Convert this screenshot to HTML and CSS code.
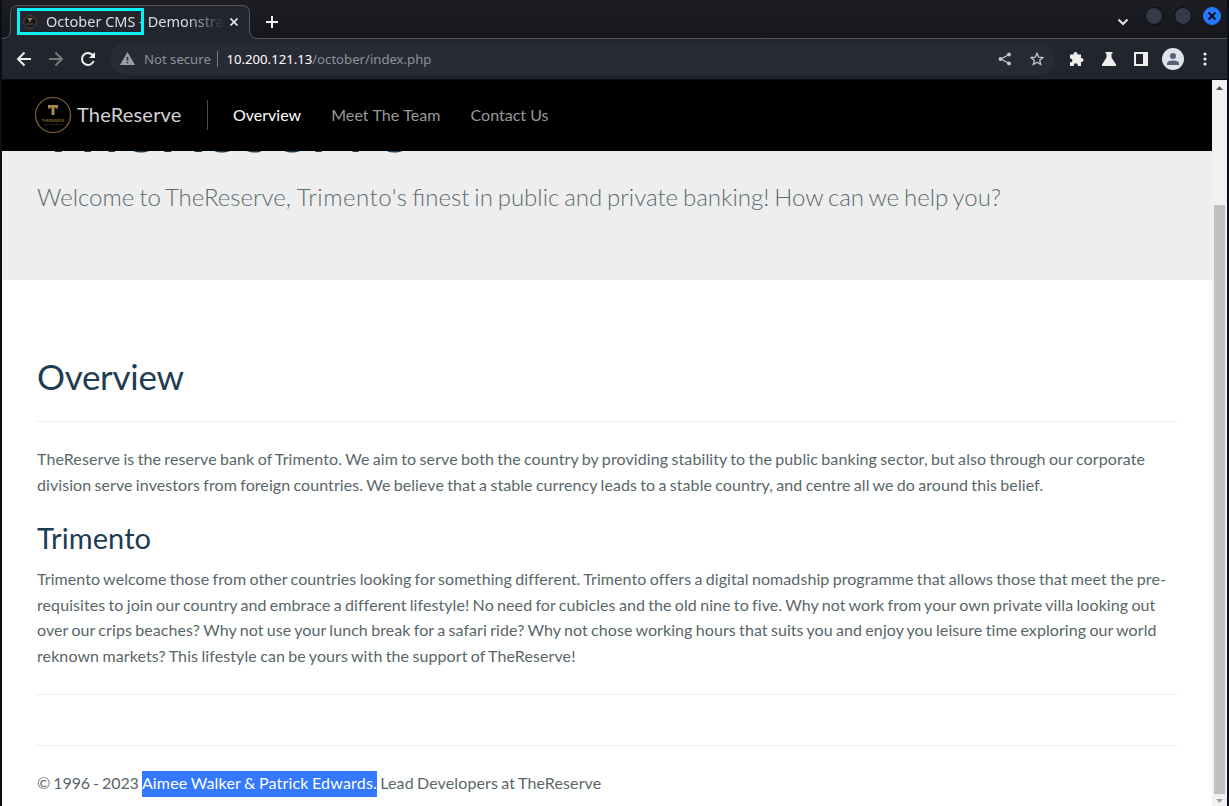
FILE: index.html
```html
<!DOCTYPE html>
<html lang="en">
<head>
<meta charset="utf-8">
<title>October CMS - Demonstration</title>
<link rel="stylesheet" href="styles.css">
</head>
<body>
<div class="window">
  <header class="tabs">
    <svg class="tab-shape" width="262" height="36" viewBox="0 0 262 36"><path class="tab-fill" d="M0 35.5Q8 35.500 8.500 27V10Q8.500 2.500 16 2.500H240Q247.500 2.500 247.500 10V27Q247.500 35.500 256 35.500V36H0Z"/><path class="tab-line" d="M0 35.500Q8.500 35.500 8.500 27V10Q8.500 2.500 16 2.500H240Q247.500 2.500 247.500 10V27Q247.500 35.500 256 35.500H262"/></svg>
    <div class="tab">
      <svg class="favicon" width="14" height="14" viewBox="0 0 36 36"><circle cx="18" cy="18" r="16" fill="#16151a" stroke="#584c40" stroke-width="2.500"/><path d="M12 8H24V12H20V18H16V12H12Z" fill="#8d784f"/><path d="M8 22H28V24.500H8Z" fill="#63574c"/></svg>
      <span class="tab-title">October CMS - Demonstra</span>
      <svg class="tab-close" width="10" height="10" viewBox="0 0 10 10"><path d="M1.500 1.500L8.500 8.500M8.500 1.500L1.500 8.500"/></svg>
    </div>
    <div class="marker"></div>
    <svg class="plus" width="12" height="12" viewBox="0 0 12 12"><path d="M6 0V12M0 6H12"/></svg>
    <div class="controls">
      <svg class="chevron" width="12" height="8" viewBox="0 0 12 8"><path d="M1.500 1.500L6 6L10.500 1.500"/></svg>
      <span class="dot"></span><span class="dot"></span>
      <span class="dot close"><svg width="10" height="10" viewBox="0 0 10 10"><path d="M1.500 1.500L8.500 8.500M8.500 1.500L1.500 8.500"/></svg></span>
    </div>
  </header>
  <div class="toolbar">
    <svg class="back" width="16" height="16" viewBox="0 0 16 16"><path d="M15 8H2M8.500 1.500L2 8L8.500 14.500"/></svg>
    <svg class="forward" width="16" height="16" viewBox="0 0 16 16"><path d="M1 8H14M7.500 1.500L14 8L7.500 14.500"/></svg>
    <svg class="reload" width="16" height="16" viewBox="0 0 16 16"><path d="M13.600 10A6 6 0 1 1 12.300 3.800L14 5.500"/><path class="solid" d="M15 1V7H9Z"/></svg>
    <div class="address">
      <svg class="warn" width="15" height="14" viewBox="0 0 15 14"><path fill="#9aa0a6" d="M7.500 0L15 13H0Z"/><path d="M6.700 5H8.300V8.500H6.700ZM6.700 9.800H8.300V11.300H6.700Z" fill="#282a34"/></svg>
      <span class="secure">Not secure</span><span class="sep"></span>
      <span class="url"><b>10.200.121.13</b>/october/index.php</span>
      <svg class="share" width="14" height="14" viewBox="0 0 14 14"><path d="M11 2.500L3 7L11 11.500"/><circle cx="11" cy="2.500" r="1.900"/><circle cx="2.500" cy="7" r="1.900"/><circle cx="11" cy="11.500" r="1.900"/></svg>
      <svg class="star" width="14" height="14" viewBox="0 0 14 14"><path d="M7 1.300L8.700 5.200L12.900 5.600L9.700 8.300L10.700 12.500L7 10.300L3.300 12.500L4.300 8.300L1.100 5.600L5.300 5.200Z"/></svg>
    </div>
    <svg class="ext" width="15" height="15" viewBox="0 0 15 15"><path d="M1.500 2.500H4.500V2A2 2 0 0 1 8.500 2V2.500H12V6H12.500A2 2 0 0 1 12.500 10H12V14H8.800V13.200A2 2 0 0 0 4.800 13.200V14H1V10.300H1.500A1.800 1.800 0 0 0 1.500 6.500H1V3Z"/></svg>
    <svg class="flask" width="14" height="14" viewBox="0 0 14 14"><path d="M3.500 0H10.500V1.500H9.500V5.500L14 12.500V14H0V12.500L4.500 5.500V1.500H3.500Z"/></svg>
    <svg class="panel" width="14" height="14" viewBox="0 0 14 14"><path fill-rule="evenodd" d="M0 0H14V14H0ZM2 2V12H9V2Z"/></svg>
    <svg class="avatar" width="22" height="22" viewBox="0 0 22 22"><circle cx="11" cy="11" r="11" fill="#dfe3ea"/><circle cx="11" cy="8" r="3" fill="#586377"/><path d="M5 17V15.500Q5 12.500 11 12.500T17 15.500V17Z" fill="#586377"/></svg>
    <svg class="more" width="4" height="14" viewBox="0 0 4 14"><circle cx="2" cy="2" r="1.600"/><circle cx="2" cy="7" r="1.600"/><circle cx="2" cy="12" r="1.600"/></svg>
  </div>
  <div class="viewport">
    <div class="page">
      <nav class="nav">
        <svg class="logo" width="38" height="38" viewBox="0 0 38 38"><circle cx="19" cy="19" r="17.500" fill="none" stroke="#7d6237" stroke-width="1.200"/><path d="M14 9H24V12.500H21.500V11.500H20.500V19H17.500V11.500H16.500V12.500H14Z" fill="#a58a50"/><text x="19" y="25.500" text-anchor="middle" textLength="23" lengthAdjust="spacingAndGlyphs">THERESERVE</text><path class="logo-rule" d="M10 28.500H28"/></svg>
        <span class="brand">TheReserve</span><span class="divider"></span>
        <a class="link active">Overview</a><a class="link team">Meet The Team</a><a class="link">Contact Us</a>
      </nav>
      <section class="hero">
        <h1>TheReserve</h1>
        <p class="lead">Welcome to TheReserve, <span class="place">Trimento's</span> finest in public and private banking! How can we help you?</p>
      </section>
      <main class="content">
        <h2>Overview</h2>
        <hr>
        <p>TheReserve is the reserve bank of Trimento. We aim to serve both the country by providing stability to the public banking sector, but also through our corporate<br><span class="snug">division serve investors from foreign countries. We believe that a stable currency leads to a stable country, and centre all we do around this belief.</span></p>
        <h3>Trimento</h3>
        <p><span class="snug">Trimento welcome those from other countries looking for something different. Trimento offers a digital nomadship programme that allows those that meet the pre-<br>requisites to join our country and embrace a different lifestyle! No need for cubicles and the old nine to five. Why not work from your own private villa looking out<br>over our crips beaches? Why not use your lunch break for a safari ride? Why not chose working hours that suits you and enjoy you leisure time exploring our world</span><br>reknown markets? This lifestyle can be yours with the support of TheReserve!</p>
        <hr class="end">
        <hr class="foot-rule">
        <footer><span class="years">© 1996 - 2023 </span><mark>Aimee Walker &amp; Patrick Edwards.</mark><span class="role"> Lead Developers at TheReserve</span></footer>
      </main>
    </div>
    <div class="scrollbar">
      <svg width="15" height="15" viewBox="0 0 15 15"><path d="M4 10L7.500 6L11 10Z" fill="#505050"/></svg>
      <div class="thumb"></div>
      <svg class="down" width="15" height="12" viewBox="0 0 15 12"><path d="M4 5H11L7.500 9Z" fill="#a3a3a3"/></svg>
    </div>
  </div>
</div>
</body>
</html>
```
FILE: styles.css
```css
* { box-sizing: border-box; }
body { margin: 0; width: 1229px; height: 806px; overflow: hidden; background: #0b0e16; font-family: Lato, sans-serif; }
svg { display: block; flex: none; }
svg path { stroke-width: 2; }
.window { height: 806px; padding: 0 2px; display: flex; flex-direction: column; }
.tabs { height: 39px; flex: none; display: flex; position: relative; background: linear-gradient(#1c1d22, #17181d); border-bottom: 1px solid #54565c; font-family: "Noto Sans", sans-serif; }
.tab-shape { position: absolute; left: 0; top: 3px; }
.tab-fill { fill: #23252e; }
.tab-line { fill: none; stroke: #54565c; }
.tab-shape .tab-line { stroke-width: 1; }
.tab { position: relative; display: flex; align-items: center; width: 248px; height: 35px; margin-top: 4px; padding-left: 21px; }
.tab-title { margin: 0 0 2px 9px; width: 178px; overflow: hidden; white-space: nowrap; font-size: 14.500px; color: #dedfe2; -webkit-mask-image: linear-gradient(90deg, #000 78%, transparent 100%); mask-image: linear-gradient(90deg, #000 78%, transparent 100%); }
.tab-close { margin-left: 5px; fill: none; stroke: #f0f0f0; }
.tab-close path { stroke-width: 1.700; }
.marker { position: absolute; left: 15px; top: 8px; width: 127px; height: 27px; border: 3px solid #00f5f9; }
.plus { margin: 16px 0 0 16px; stroke: #f5f5f5; }
.controls { margin-left: auto; display: flex; gap: 11px; padding: 7px 6px 0 0; }
.chevron { margin: 11px 5px 0 0; fill: none; stroke: #e5e5e5; }
.dot { width: 18px; height: 18px; border-radius: 50%; background: #363a46; border: 1px solid #0b0c10; }
.close { background: #2777ff; border-color: #2777ff; display: grid; place-items: center; stroke: #10131c; }
.toolbar { height: 41px; flex: none; background: #23252e; border-bottom: 1px solid #0c0d12; display: flex; align-items: center; padding-left: 14px; font-family: "Noto Sans", sans-serif; font-size: 13.150px; }
.back, .forward, .reload { fill: none; stroke: #f1f1f1; margin-right: 16px; }
.forward { stroke: #77787c; }
.reload .solid { fill: #f1f1f1; stroke: none; }
.address { width: 945px; height: 32px; margin-left: -2px; margin-right: 14px; border-radius: 16px; background: #282a34; display: flex; align-items: center; padding-left: 10px; white-space: nowrap; }
.secure { color: #8d9298; margin-left: 9px; width: 73px; }
.sep { width: 1px; height: 16px; background: #777b82; margin-right: 8.500px; }
.url { color: #8d9298; }
.url b { color: #fff; font-weight: 400; }
.share { margin-left: auto; margin-right: 18px; fill: #c6c7ca; stroke: none; }
.share path { fill: none; stroke: #c6c7ca; stroke-width: 1.300; }
.star { margin-right: 11px; fill: none; stroke: #c6c7ca; }
.star path { stroke-width: 1.300; }
.ext, .flask, .panel, .more { fill: #eeeeec; }
.ext, .flask { margin-right: 18px; }
.panel { margin-right: 14px; }
.avatar { margin-right: 19px; }
.viewport { height: 726px; display: flex; }
.page { width: 1210px; background: #fff; overflow: hidden; }
.nav { height: 71px; background: #000; display: flex; align-items: center; padding: 0 0 2px 32px; }
.logo text { font: 700 4.500px Lato, sans-serif; fill: #80602f; }
.logo .logo-rule { stroke: #392b1b; stroke-width: .8; stroke-dasharray: 5 1 9 1; }
.brand { margin-left: 5px; width: 130px; margin-bottom: 2px; font-size: 20px; letter-spacing: .2px; color: #d1d1d1; }
.divider { width: 1px; height: 30px; background: #4d4d4d; margin-right: 25px; }
.link { font-size: 16px; color: #999; margin-right: 30px; }
.link.active { color: #fff; }
.team { letter-spacing: .1px; }
.hero { height: 129px; overflow: hidden; background: #eee; padding-left: 35px; }
h1 { font-size: 72px; line-height: 80px; margin: -67px 0 0; color: #1e3c52; font-weight: 400; letter-spacing: .6px; white-space: nowrap; }
.lead { margin: 14px 0 0; font-size: 24px; font-weight: 300; line-height: 38px; color: #5c6b70; word-spacing: -1.650px; white-space: nowrap; }
.place { letter-spacing: .5px; margin-left: 1px; }
.content { padding: 0 35px; color: #596669; font-size: 16px; line-height: 25.600px; white-space: nowrap; }
h2 { margin: 75px 0 24px; font-size: 35px; letter-spacing: -.3px; line-height: 42px; font-weight: 400; color: #1e3c52; }
h3 { margin: 23px 0 11px; font-size: 29px; letter-spacing: .1px; line-height: 35px; font-weight: 400; color: #1e3c52; }
hr { height: 1px; border: 0; margin: 0; background: #eee; }
p { margin: 0; }
.content p, footer { word-spacing: -.9px; letter-spacing: .1px; }
.content .snug { letter-spacing: .076px; }
hr + p { margin-top: 24px; }
.end { margin-top: 25px; }
.foot-rule { margin-top: 50px; }
footer { margin-top: 24px; }
.years { letter-spacing: -.1px; }
mark { padding: 2px 0 5px; background: #3478ff; color: #fff; letter-spacing: .18px; }
.role { letter-spacing: .12px; }
.scrollbar { width: 15px; background: #f1f1f1; display: flex; flex-direction: column; }
.thumb { height: 589px; width: 11px; margin: 110px 2px 0; background: #c1c1c1; }
```
